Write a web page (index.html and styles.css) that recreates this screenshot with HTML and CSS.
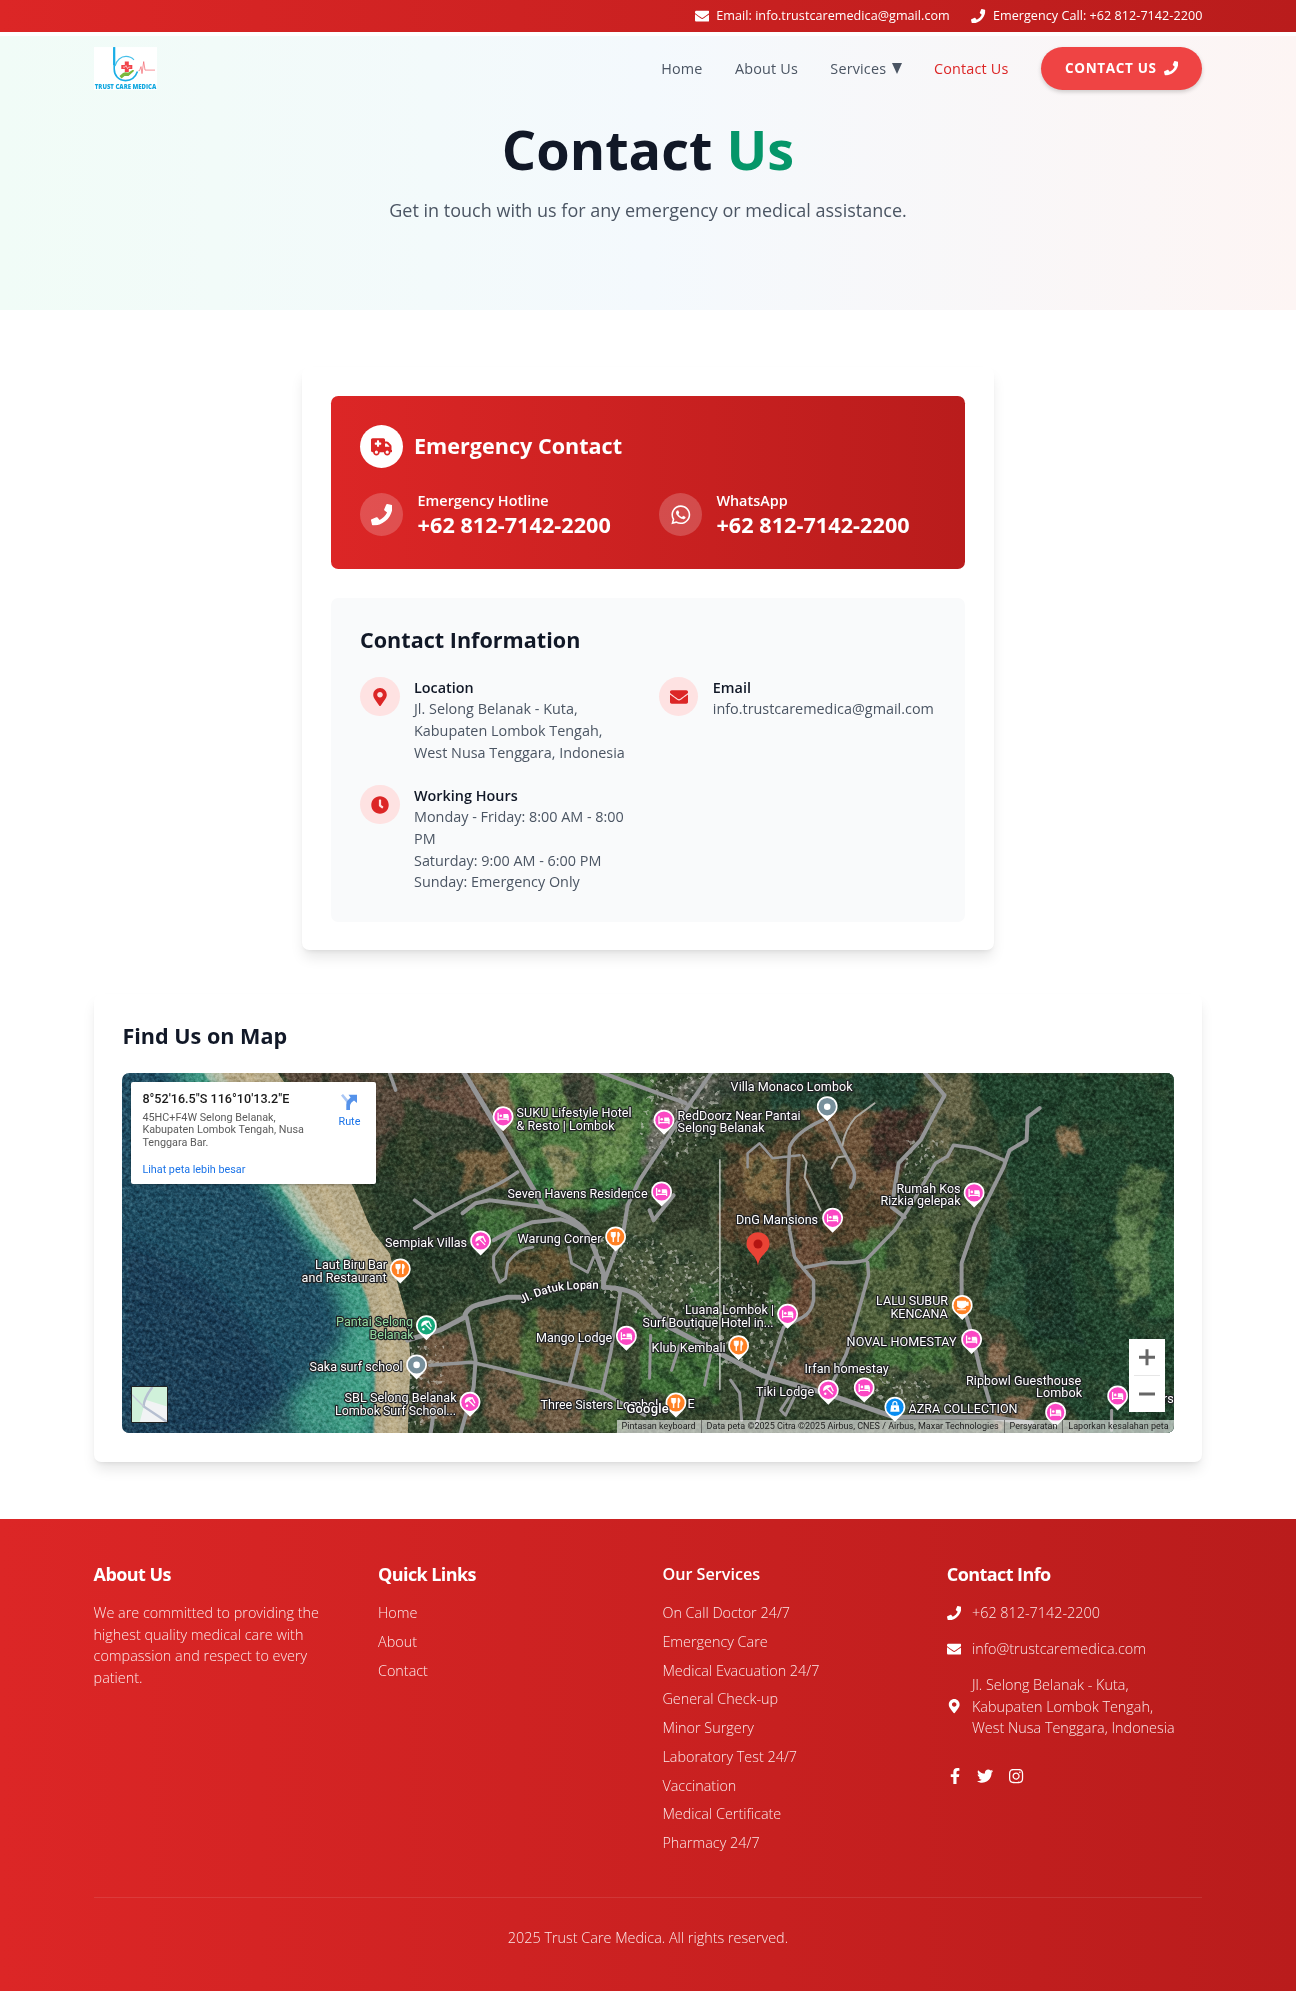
FILE: index.html
```html
<!DOCTYPE html>
<html lang="en">
<head>
<meta charset="utf-8">
<title>Contact Us - Trust Care Medica</title>
<link rel="stylesheet" href="styles.css">
</head>
<body>
<svg class="sprite" aria-hidden="true">
  <symbol id="i-phone" viewBox="0 0 512 512"><path d="M493.4 24.6l-104-24c-11.3-2.6-22.9 3.3-27.5 13.9l-48 112c-4.2 9.8-1.4 21.3 6.9 28l60.6 49.6c-36 76.7-98.9 140.5-177.2 177.2l-49.6-60.6c-6.8-8.3-18.2-11.1-28-6.9l-112 48C3.9 366.5-2 378.1.6 389.4l24 104C27.1 504.2 36.7 512 48 512c256.1 0 464-207.5 464-464 0-11.2-7.7-20.9-18.6-23.4z"/></symbol>
  <symbol id="i-mail" viewBox="0 0 512 512"><path d="M502.3 190.8c3.9-3.1 9.7-.2 9.7 4.7V400c0 26.5-21.5 48-48 48H48c-26.5 0-48-21.5-48-48V195.6c0-5 5.7-7.8 9.7-4.7 22.4 17.4 52.1 39.5 154.1 113.6 21.1 15.4 56.7 47.8 92.2 47.6 35.7.3 72-32.8 92.3-47.6 102-74.1 131.6-96.3 154-113.7zM256 320c23.2.4 56.6-29.2 73.4-41.4 132.7-96.3 142.8-104.7 173.4-128.7 5.8-4.5 9.2-11.5 9.2-18.9v-19c0-26.5-21.5-48-48-48H48c-26.5 0-48 21.5-48 48v19c0 7.4 3.4 14.3 9.2 18.9 30.6 23.9 40.7 32.4 173.4 128.7 16.8 12.2 50.2 41.8 73.4 41.4z"/></symbol>
  <symbol id="i-marker" viewBox="0 0 384 512"><path d="M172.268 501.67C26.97 291.031 0 269.413 0 192 0 85.961 85.961 0 192 0s192 85.961 192 192c0 77.413-26.97 99.031-172.268 309.67-9.535 13.774-29.93 13.773-39.464 0zM192 272c44.183 0 80-35.817 80-80s-35.817-80-80-80-80 35.817-80 80 35.817 80 80 80z"/></symbol>
  <symbol id="i-clock" viewBox="0 0 512 512"><path d="M256,8C119,8,8,119,8,256S119,504,256,504,504,393,504,256,393,8,256,8Zm92.49,313h0l-20,25a16,16,0,0,1-22.49,2.5h0l-67-49.72a40,40,0,0,1-15-31.23V112a16,16,0,0,1,16-16h32a16,16,0,0,1,16,16V256l58,42.5A16,16,0,0,1,348.49,321Z"/></symbol>
  <symbol id="i-whatsapp" viewBox="0 0 448 512"><path d="M380.9 97.1C339 55.1 283.2 32 223.9 32c-122.4 0-222 99.6-222 222 0 39.1 10.2 77.3 29.6 111L0 480l117.7-30.9c32.4 17.7 68.9 27 106.1 27h.1c122.3 0 224.1-99.6 224.1-222 0-59.3-25.2-115-67.1-157zm-157 341.6c-33.2 0-65.7-8.9-94-25.7l-6.7-4-69.8 18.3L72 359.2l-4.4-7c-18.5-29.4-28.2-63.3-28.2-98.2 0-101.7 82.8-184.5 184.6-184.5 49.3 0 95.6 19.2 130.4 54.1 34.8 34.9 56.2 81.2 56.1 130.5 0 101.8-84.9 184.6-186.6 184.6zm101.2-138.2c-5.5-2.8-32.8-16.2-37.9-18-5.1-1.9-8.8-2.8-12.5 2.8-3.7 5.6-14.3 18-17.6 21.8-3.2 3.7-6.5 4.2-12 1.4-32.6-16.3-54-29.1-75.5-66-5.7-9.8 5.7-9.1 16.3-30.3 1.8-3.7.9-6.9-.5-9.7-1.4-2.8-12.5-30.1-17.1-41.2-4.5-10.8-9.1-9.3-12.5-9.5-3.2-.2-6.9-.2-10.6-.2-3.7 0-9.7 1.4-14.8 6.9-5.1 5.6-19.4 19-19.4 46.3 0 27.3 19.9 53.7 22.6 57.4 2.8 3.7 39.1 59.7 94.8 83.8 35.2 15.2 49 16.5 66.6 13.9 10.7-1.6 32.8-13.4 37.4-26.4 4.6-13 4.6-24.1 3.2-26.4-1.3-2.5-5-3.9-10.5-6.6z"/></symbol>
  <symbol id="i-ambulance" viewBox="0 0 640 512"><path d="M0 48C0 21.5 21.5 0 48 0H368c26.5 0 48 21.5 48 48V96h50.7c17 0 33.3 6.7 45.3 18.7L589.3 192c12 12 18.7 28.3 18.7 45.3V256v32 64c17.7 0 32 14.3 32 32s-14.3 32-32 32H576c0 53-43 96-96 96s-96-43-96-96H256c0 53-43 96-96 96s-96-43-96-96H48c-26.5 0-48-21.5-48-48V48zM416 256H544V237.3L466.7 160H416v96zM160 464a48 48 0 1 0 0-96 48 48 0 1 0 0 96zm368-48a48 48 0 1 0 -96 0 48 48 0 1 0 96 0zM176 80v48l-48 0c-8.8 0-16 7.2-16 16v32c0 8.8 7.2 16 16 16h48v48c0 8.8 7.2 16 16 16h32c8.8 0 16-7.2 16-16V192h48c8.8 0 16-7.2 16-16V144c0-8.8-7.2-16-16-16H240V80c0-8.8-7.2-16-16-16H192c-8.8 0-16 7.2-16 16z"/></symbol>
  <symbol id="i-facebook" viewBox="0 0 320 512"><path d="M279.14 288l14.22-92.66h-88.91v-60.13c0-25.35 12.42-50.06 52.24-50.06h40.42V6.26S260.43 0 225.36 0c-73.22 0-121.08 44.38-121.08 124.72v70.62H22.89V288h81.39v224h100.17V288z"/></symbol>
  <symbol id="i-twitter" viewBox="0 0 512 512"><path d="M459.37 151.716c.325 4.548.325 9.097.325 13.645 0 138.72-105.583 298.558-298.558 298.558-59.452 0-114.68-17.219-161.137-47.106 8.447.974 16.568 1.299 25.34 1.299 49.055 0 94.213-16.568 130.274-44.832-46.132-.975-84.792-31.188-98.112-72.772 6.498.974 12.995 1.624 19.818 1.624 9.421 0 18.843-1.3 27.614-3.573-48.081-9.747-84.143-51.98-84.143-102.985v-1.299c13.969 7.797 30.214 12.67 47.431 13.319-28.264-18.843-46.781-51.005-46.781-87.391 0-19.492 5.197-37.36 14.294-52.954 51.655 63.675 129.3 105.258 216.365 109.807-1.624-7.797-2.599-15.918-2.599-24.04 0-57.828 46.782-104.934 104.934-104.934 30.213 0 57.502 12.67 76.67 33.137 23.715-4.548 46.456-13.32 66.599-25.34-7.798 24.366-24.366 44.833-46.132 57.827 21.117-2.273 41.584-8.122 60.426-16.243-14.292 20.791-32.161 39.308-52.628 54.253z"/></symbol>
  <symbol id="i-instagram" viewBox="0 0 448 512"><path d="M224.1 141c-63.6 0-114.9 51.3-114.9 114.9s51.3 114.9 114.9 114.9S339 319.5 339 255.9 287.7 141 224.1 141zm0 189.6c-41.1 0-74.7-33.5-74.7-74.7s33.5-74.7 74.7-74.7 74.7 33.5 74.7 74.7-33.6 74.7-74.7 74.7zm146.4-194.3c0 14.9-12 26.8-26.8 26.8-14.9 0-26.8-12-26.8-26.8s12-26.8 26.8-26.8 26.8 12 26.8 26.8zm76.1 27.2c-1.7-35.9-9.9-67.7-36.2-93.9-26.2-26.2-58-34.4-93.9-36.2-37-2.1-147.9-2.1-184.9 0-35.8 1.7-67.6 9.9-93.9 36.1s-34.4 58-36.2 93.9c-2.1 37-2.1 147.9 0 184.9 1.7 35.9 9.9 67.7 36.2 93.9s58 34.4 93.9 36.2c37 2.1 147.9 2.1 184.9 0 35.9-1.7 67.7-9.9 93.9-36.2 26.2-26.2 34.4-58 36.2-93.9 2.1-37 2.1-147.8 0-184.8zM398.8 388c-7.8 19.6-22.9 34.7-42.6 42.6-29.5 11.7-99.5 9-132.1 9s-102.7 2.6-132.1-9c-19.6-7.8-34.7-22.9-42.6-42.6-11.7-29.5-9-99.5-9-132.1s-2.6-102.7 9-132.1c7.8-19.6 22.9-34.7 42.6-42.6 29.5-11.7 99.5-9 132.1-9s102.7-2.6 132.1 9c19.6 7.8 34.7 22.9 42.6 42.6 11.7 29.5 9 99.5 9 132.1s2.7 102.7-9 132.1z"/></symbol>
</svg>

<div class="topbar">
  <div class="container topbar-inner">
    <span class="topbar-item"><svg class="icon-16"><use href="#i-mail"/></svg>Email: info.trustcaremedica@gmail.com</span>
    <span class="topbar-item"><svg class="icon-16"><use href="#i-phone"/></svg>Emergency Call: +62 812-7142-2200</span>
  </div>
</div>

<section class="hero">
  <header class="container nav">
    <svg class="logo" viewBox="0 0 63 43">
      <rect width="63" height="43" fill="#fff"/>
      <path d="M20.2 .5V22c0 6.5 4.500 11.500 11.300 11.500 5.500 0 10-3.500 12-9" fill="none" stroke="#19aee6" stroke-width="1.600"/>
      <path d="M20.200 0v18" stroke="#19aee6" stroke-width="2.200"/>
      <path d="M21 19c1.500-6 6-9.700 11-9.700 3.200 0 6 1.300 8 3.400" fill="none" stroke="#45bfe9" stroke-width="1.100"/>
      <path d="M30.800 14.500h4v3.300h3.500v4h-3.500V25h-4v-3.200h-3.500v-4h3.500z" fill="#f2434a"/>
      <path d="M29 20h2l1-1.500 1.500 3 1-1.500h2" fill="none" stroke="#fff" stroke-width=".6"/>
      <path d="M25.500 29l3.500-3c2-1.500 4-.5 5.500-.5l4-2.500c1.500-.5 2 .5 1 1.500l-5 4.500h-4l-3 2.500z" fill="#79b83e"/>
      <path d="M44.500 23.500h1l1.500-4 1 7 1.700-12 1.300 8.500h10" fill="none" stroke="#f2616a" stroke-width=".7"/>
      <text x=".8" y="42.300" textLength="61.500" lengthAdjust="spacingAndGlyphs" class="logo-text">TRUST CARE MEDICA</text>
    </svg>
    <nav class="menu">
      <a>Home</a>
      <a>About Us</a>
      <a class="has-menu">Services <svg class="caret" viewBox="0 0 10 11"><path d="M0 0h10L5 11z"/></svg></a>
      <a class="active">Contact Us</a>
      <a class="cta">CONTACT US <svg class="icon-16"><use href="#i-phone"/></svg></a>
    </nav>
  </header>
  <h1>Contact <span>Us</span></h1>
  <p>Get in touch with us for any emergency or medical assistance.</p>
</section>

<main>
  <section class="card contact-card">
    <div class="emergency">
      <div class="emergency-head">
        <span class="disc disc-white"><svg class="icon-24"><use href="#i-ambulance"/></svg></span>
        <h2>Emergency Contact</h2>
      </div>
      <div class="grid-2">
        <div class="line-item">
          <span class="disc disc-glass"><svg class="icon-24"><use href="#i-phone"/></svg></span>
          <div><p class="line-label">Emergency Hotline</p><p class="line-number">+62 812-7142-2200</p></div>
        </div>
        <div class="line-item">
          <span class="disc disc-glass"><svg class="icon-24"><use href="#i-whatsapp"/></svg></span>
          <div><p class="line-label">WhatsApp</p><p class="line-number">+62 812-7142-2200</p></div>
        </div>
      </div>
    </div>
    <div class="info">
      <h2 class="heading">Contact Information</h2>
      <div class="grid-2">
        <div class="info-item">
          <span class="disc disc-pink"><svg class="icon-20"><use href="#i-marker"/></svg></span>
          <div><h3>Location</h3><p>Jl. Selong Belanak - Kuta,<br>Kabupaten Lombok Tengah,<br>West Nusa Tenggara, Indonesia</p></div>
        </div>
        <div class="info-item">
          <span class="disc disc-pink"><svg class="icon-20"><use href="#i-mail"/></svg></span>
          <div><h3>Email</h3><p>info.trustcaremedica@gmail.com</p></div>
        </div>
        <div class="info-item">
          <span class="disc disc-pink"><svg class="icon-20"><use href="#i-clock"/></svg></span>
          <div><h3>Working Hours</h3><p>Monday - Friday: 8:00 AM - 8:00<br>PM<br>Saturday: 9:00 AM - 6:00 PM<br>Sunday: Emergency Only</p></div>
        </div>
      </div>
    </div>
  </section>

  <section class="card map-card">
    <h2 class="heading">Find Us on Map</h2>
    <div class="map">
      <svg class="map-canvas" viewBox="122.4 1072.8 1051.2 360" preserveAspectRatio="none">
        <defs>
          <filter id="soft" x="-20%" y="-20%" width="140%" height="140%"><feTurbulence type="fractalNoise" baseFrequency=".045" numOctaves="3" seed="4"/><feDisplacementMap in="SourceGraphic" scale="22"/><feGaussianBlur stdDeviation="1.600"/></filter>
          <filter id="surf" x="-20%" y="-20%" width="140%" height="140%"><feGaussianBlur stdDeviation="9"/></filter>
          <filter id="edge"><feGaussianBlur stdDeviation="1.200"/></filter>
          <filter id="trees" x="0" y="0" width="100%" height="100%" color-interpolation-filters="sRGB"><feTurbulence type="fractalNoise" baseFrequency=".06" numOctaves="4" seed="11"/><feColorMatrix values="0 0 0 0 .08  0 0 0 0 .17  0 0 0 0 .11  5 0 0 0 -2.500"/></filter>
          <filter id="earth" x="0" y="0" width="100%" height="100%" color-interpolation-filters="sRGB"><feTurbulence type="fractalNoise" baseFrequency=".035" numOctaves="4" seed="23"/><feColorMatrix values="0 0 0 0 .46  0 0 0 0 .42  0 0 0 0 .3  0 5 0 0 -2.700"/></filter>
          <filter id="grain" x="0" y="0" width="100%" height="100%" color-interpolation-filters="sRGB"><feTurbulence type="fractalNoise" baseFrequency=".3" numOctaves="3" seed="7"/><feColorMatrix values="1.500 0 0 0 -.25  1.500 0 0 0 -.25  1.500 0 0 0 -.25  0 0 0 0 1"/></filter>
          <filter id="roofs" x="0" y="0" width="100%" height="100%" color-interpolation-filters="sRGB"><feTurbulence type="fractalNoise" baseFrequency=".2" numOctaves="2" seed="31"/><feColorMatrix values="0 0 0 0 .78  0 0 0 0 .78  0 0 0 0 .75  0 12 0 0 -7.300"/></filter>
          <filter id="ripple" x="0" y="0" width="100%" height="100%" color-interpolation-filters="sRGB"><feTurbulence type="fractalNoise" baseFrequency=".03 .25" numOctaves="3" seed="9"/><feColorMatrix values="0 0 0 0 .45  0 0 0 0 .6  0 0 0 0 .65  1.600 0 0 0 -.65"/></filter>
          <clipPath id="land"><path d="M270 1060L354 1187 372 1230 390 1253 400 1290 408 1320 411 1360 408 1440H1180V1060z"/></clipPath>
          <clipPath id="sea"><path d="M110 1060H208L290 1187 319 1230 354 1253 372 1320 376 1360 369 1440H110z"/></clipPath>
          <clipPath id="town"><path d="M650 1073h70v60l-60 40-20-40zM600 1235h50l130 60 10 60-20 30-50-20-130-80zM905 1140h40l-20 40h-20zM405 1345h40v80h-40zM870 1375h60v30h-60z"/></clipPath>
          <g id="pin"><path d="M0 14.500L-6.500 8A10.400 10.400 0 1 1 6.500 8z" fill="#fff"/><circle r="8.700" fill="currentColor"/></g>
          <g id="bed"><use href="#pin"/><path d="M-5-4v8M-5 2.500H5.200M5 4v-5.300" stroke="#fff" stroke-width="1.300"/><path d="M.2-2.700h4.900v4H.2z" fill="#fff"/><circle cx="-2.300" cy="-1" r="1.300" fill="#fff"/></g>
          <g id="fork"><use href="#pin"/><path d="M-2.300-5v10M2.500-5v10" stroke="#fff" stroke-width="1.500"/><path d="M-4.500-5v3.500a2.200 2 0 0 0 4.400 0V-5M2.500-5c2.500 1.500 2 4.500 0 5.500" fill="#fff" stroke="#fff" stroke-width=".6"/></g>
          <g id="beach"><use href="#pin"/><path d="M-5 1A5 5 0 0 1 3-4z" fill="#fff"/><path d="M-1-1.500L4.500 4M2-5l3 6" stroke="#fff" stroke-width="1.300"/><circle cx="-3" cy="3.500" r="1.200" fill="#fff"/></g>
          <g id="dot"><use href="#pin"/><circle r="3.300" fill="#fff"/></g>
          <path id="lopan" d="M522 1304Q545 1292 563 1290T606 1289"/>
        </defs>

        <rect x="122" y="1072" width="1053" height="362" fill="#1c4a60"/>
        <path d="M150 1060L210 1060 300 1190 360 1260 378 1330 378 1440H240C280 1400 335 1370 345 1330 335 1270 290 1210 260 1180 230 1130 190 1100 165 1060z" fill="#3b9480" filter="url(#surf)"/>
        <path d="M205 1060L290 1187 319 1230 354 1265 368 1310 371 1360 345 1440" fill="none" stroke="#45a88b" stroke-width="18" filter="url(#surf)"/>
        <path d="M122 1240Q260 1280 300 1440H122z" fill="#12304e" opacity=".6" filter="url(#surf)"/>
        <g clip-path="url(#sea)"><rect x="-150" y="900" width="800" height="700" filter="url(#ripple)" opacity=".22" transform="rotate(28 250 1250)"/></g>
        <path d="M203 1060L290 1187 319 1230 349 1253 368 1300 376 1345 374 1440H450V1060z" fill="#b5a988" filter="url(#edge)"/>
        <path d="M206 1062L290 1187 317 1227 347 1256" fill="none" stroke="#b3c2ae" stroke-width="15" opacity=".8" filter="url(#edge)"/>
        <path d="M240 1062L325 1190 345 1235 375 1262 390 1320 394 1440" fill="none" stroke="#c7b791" stroke-width="9" opacity=".6" filter="url(#edge)"/>

        <g clip-path="url(#land)">
          <rect x="250" y="1060" width="930" height="380" fill="#37472f"/>
          <g filter="url(#soft)">
            <path d="M270 1060H500L515 1150 440 1175 380 1180z" fill="#594a3a"/>
            <path d="M400 1090L470 1085 500 1140 440 1160z" fill="#664f40"/>
            <path d="M480 1073H660L640 1190 560 1210 525 1160z" fill="#4d7841"/>
            <path d="M520 1073h55l10 40-50 12zM590 1120h45l-10 50-45-5z" fill="#668a4d"/>
            <path d="M560 1075h35l5 30-30 5z" fill="#4a4a3a"/>
            <path d="M545 1150h35l-5 40-25 5z" fill="#8b8a5e"/>
            <path d="M520 1165h30l10 35-20 10zM590 1180h40l-5 25-40 5z" fill="#3f8045"/>
            <path d="M470 1073h35l14 50-18 8z" fill="#7f6d50"/>
            <path d="M410 1100L500 1130 510 1180 430 1210 375 1180z" fill="#293c29" opacity=".8"/>
            <path d="M370 1180L480 1210 495 1290 430 1320 400 1300z" fill="#293c2c"/>
            <path d="M465 1150h45l-4 35-45 10z" fill="#74603f"/>
            <path d="M465 1210h65l-10 35h-50z" fill="#42703b"/>
            <path d="M500 1250h75l-5 30h-60z" fill="#665434"/>
            <path d="M480 1285h120l-10 30-120 5z" fill="#2b3f2a"/>
            <path d="M420 1335h45l5 90h-50z" fill="#705842"/>
            <path d="M480 1310H600V1370L485 1360z" fill="#695a3e"/>
            <path d="M480 1370L600 1390V1432H490z" fill="#705c45"/>
            <path d="M520 1310h20v110h-20zM585 1360h40v70h-40z" fill="#4f6e3a"/>
            <path d="M620 1200h105v60l-60 60-45-20z" fill="#4a593d"/>
            <path d="M700 1110L790 1073H700z" fill="#4a5144"/>
            <path d="M640 1180L690 1110 720 1073H700L650 1120z" fill="#696a60"/>
            <path d="M725 1150L790 1130 850 1140 900 1200 890 1240 800 1250 720 1240z" fill="#59442f"/>
            <path d="M800 1110L900 1110 900 1200 860 1190z" fill="#6f553a"/>
            <path d="M740 1155h40v45h-30z" fill="#7f6843"/>
            <path d="M805 1160h25l10 50-30 20z" fill="#2b3426"/>
            <path d="M650 1170h60v60h-50z" fill="#303c2a"/>
            <path d="M740 1250L800 1270 790 1300 730 1300z" fill="#2d3a28"/>
            <path d="M770 1260L800 1300 790 1330 760 1320zM690 1285l30-5v40l-35-5z" fill="#43683a"/>
            <path d="M795 1220h20l20 60-15 50-30-10z" fill="#6a4e39"/>
            <path d="M815 1270h45l-15 90h-50z" fill="#544f35"/>
            <path d="M765 1365L840 1350 825 1390z" fill="#735944"/>
            <path d="M870 1225H955V1380L860 1385 850 1340z" fill="#53633d"/>
            <path d="M855 1240h35l-5 30h-25zM870 1340l80-5v30l-80 12z" fill="#44703a"/>
            <path d="M640 1310L720 1345V1400L640 1390z" fill="#417037"/>
            <path d="M770 1073H930L900 1110H770z" fill="#244332"/>
            <path d="M925 1073h45v60l-25 35-15-20z" fill="#67664a"/>
            <path d="M880 1110h50l-30 60h-30z" fill="#46322c"/>
            <path d="M925 1160h75l-25 60-55 10z" fill="#4b5b3e"/>
            <path d="M975 1073H1180V1440H1090L1000 1300 1010 1170z" fill="#23452f"/>
            <path d="M1055 1125h22l5 25-18 6z" fill="#8b7353"/>
            <path d="M1130 1165h30l5 65-40 60-15-30z" fill="#4b6b40"/>
            <path d="M1115 1220h35v70l-30 15z" fill="#5e8050"/>
            <path d="M1150 1220h30v100h-30z" fill="#32603a"/>
            <path d="M990 1220l50 30-10 80-45-20z" fill="#2c5037"/>
            <path d="M1020 1240h50l10 100h-50z" fill="#1c3729"/>
            <path d="M985 1335h20v40h-15zM1010 1395h25l-10 30h-35z" fill="#84694f"/>
            <path d="M890 1370h95v45h-80z" fill="#4b573d"/>
          </g>
          <rect x="250" y="1060" width="930" height="380" filter="url(#earth)" opacity=".14"/>
          <rect x="250" y="1060" width="930" height="380" filter="url(#trees)" opacity=".5"/>
          <g clip-path="url(#town)"><rect x="250" y="1060" width="930" height="380" filter="url(#roofs)" opacity=".6"/></g>
        </g>
        <rect x="122" y="1072" width="1053" height="362" filter="url(#grain)" class="grain"/>

        <g fill="none" stroke="#949596" stroke-width="4" stroke-linejoin="round" stroke-linecap="round">
          <path d="M463 1070L511 1150 545 1208Q580 1218 590 1237L604 1273V1287" stroke-width="5"/>
          <path d="M415 1228L436 1215 468 1198Q500 1185 518 1172M415 1200L435 1215M390 1073l6 17" stroke-width="3.500"/>
          <path d="M463 1213L476 1203 490 1200 545 1207M494 1240Q515 1228 533 1222L561 1219Q580 1224 590 1237"/>
          <path d="M511 1233L494 1256V1268L500 1282 506 1278 508 1263Q518 1248 533 1247M569 1247L572 1263 588 1272 594 1257" stroke-width="3"/>
          <path d="M601 1072L650 1090 686 1103M712 1072L686 1110 640 1180 628 1205 624 1230 604 1283M650 1210l4 10 20-25"/>
          <path d="M621 1290L611 1353 602 1393M580 1343L570 1383M430 1365L472 1362 602 1392 645 1415" stroke-width="3.500"/>
          <path d="M408 1340L440 1330 465 1317Q466 1308 480 1304L508 1297H525M604 1287Q630 1288 640 1297L670 1327 762 1375 825 1393 895 1417 991 1417 1032 1423" stroke-width="5"/>
          <path d="M467 1317L476 1360 474 1387 461 1433M435 1407L431 1433"/>
          <path d="M823 1120Q796 1132 790 1147L788 1187 790 1230 795 1257Q806 1272 814 1280V1300Q812 1312 803 1317L784 1327 769 1373 757 1425" stroke-width="3.500"/>
          <path d="M830 1122L842 1147 854 1170Q857 1178 851 1187" stroke-width="3.500"/>
          <path d="M843 1145Q845 1130 856 1117L875 1103M803 1155L807 1162 805 1177 813 1193 821 1210M832 1168L838 1157 846 1156" stroke-width="2" stroke="#aaa9a2"/>
          <path d="M748 1167V1153L760 1143 773 1158 800 1155" stroke-width="2.500"/>
          <path d="M925 1072L945 1095 939 1106 921 1140 899 1163 892 1207 905 1217"/>
          <path d="M1040 1108L1028 1117 1027 1140 1010 1150 1004 1167 975 1225 962 1263V1300L973 1337 980 1367 990 1402"/>
          <path d="M1004 1160L976 1148 954 1145 948 1156 936 1163 910 1207 895 1230 866 1260Q845 1264 832 1262L806 1267M868 1262L869 1275 847 1353 834 1380" stroke-width="3.500"/>
          <path d="M731 1380L740 1393 742 1420M799 1388L786 1415 781 1410 792 1393M651 1335L650 1378M680 1345L672 1370M711 1355L705 1385M1112 1410v20" stroke-width="3"/>
        </g>
        <path d="M720.300 1159V1390" stroke="#e6e6e4" stroke-width="1.200"/>

        <g class="pins">
          <use href="#bed" x="503.500" y="1116.500"/><use href="#bed" x="664.400" y="1120"/><use href="#bed" x="662" y="1191.700"/><use href="#bed" x="833" y="1218"/>
          <use href="#bed" x="974.500" y="1192.700"/><use href="#beach" x="481" y="1240.700"/><use href="#fork" x="616" y="1236.700" class="orange"/><use href="#fork" x="400.700" y="1268.700" class="orange"/>
          <use href="#beach" x="426.800" y="1325.500" class="green"/><use href="#dot" x="417" y="1364.700" class="slate"/><use href="#beach" x="470.400" y="1402"/><use href="#bed" x="626.800" y="1336"/>
          <use href="#dot" x="827.600" y="1106.500" class="slate"/><use href="#bed" x="788" y="1314"/><use href="#fork" x="739" y="1345.500" class="orange"/>
          <use href="#pin" x="962.600" y="1305.300" class="orange"/><path d="M958 1301h8v5q-4 4-8 0zM966 1302h2.500v3H966M957.500 1309.500h9" fill="#fff" stroke="#fff" stroke-width="1"/>
          <use href="#bed" x="972" y="1339.300"/><use href="#beach" x="828.700" y="1390"/><use href="#bed" x="864.600" y="1387.700"/>
          <use href="#pin" x="895.300" y="1407" class="blue"/><path d="M891.500 1405h7.600l.8 6.500h-9.200z" fill="#fff"/><path d="M893.300 1405v-1.500a2 2 0 0 1 4 0v1.500" fill="none" stroke="#fff" stroke-width="1.200"/><circle cx="895.300" cy="1408.500" r="1" fill="#0a8df0"/>
          <use href="#bed" x="1056" y="1412.300"/><use href="#bed" x="1118" y="1395.700"/><use href="#fork" x="676.300" y="1402.700" class="orange"/>
        </g>
        <path d="M758.400 1265.500C757 1254 746.900 1252.500 746.900 1243.500a11.500 11.500 0 0 1 23 0C769.900 1252.500 759.800 1254 758.400 1265.500z" fill="#ea4335"/><circle cx="758.400" cy="1243.800" r="4.500" fill="#b31412"/>

        <g class="labels">
          <text x="517" y="1117.300" textLength="115">SUKU Lifestyle Hotel</text><text x="517" y="1130" textLength="98">&amp; Resto | Lombok</text>
          <text x="678" y="1119.700" textLength="123">RedDoorz Near Pantai</text><text x="678" y="1132.300" textLength="87">Selong Belanak</text>
          <text x="731" y="1090.700" textLength="122">Villa Monaco Lombok</text>
          <text x="508" y="1198" textLength="140">Seven Havens Residence</text>
          <text x="736.500" y="1224.300" textLength="82">DnG Mansions</text>
          <text x="897" y="1192.700" textLength="64">Rumah Kos</text><text x="881" y="1205.300" textLength="80">Rizkia gelepak</text>
          <text x="385.500" y="1246.700" textLength="82">Sempiak Villas</text><text x="518" y="1243" textLength="84">Warung Corner</text>
          <text x="315.500" y="1269" textLength="72">Laut Biru Bar</text><text x="302" y="1282" textLength="85">and Restaurant</text>
          <text x="336.500" y="1326" textLength="77" class="leaf">Pantai Selong</text><text x="370" y="1338.700" textLength="44" class="leaf">Belanak</text>
          <text x="310" y="1371" textLength="93">Saka surf school</text>
          <text x="345" y="1402.300" textLength="112">SBL Selong Belanak</text><text x="335.500" y="1415" textLength="121">Lombok Surf School...</text>
          <text x="536.500" y="1342" textLength="76">Mango Lodge</text>
          <text x="541" y="1409" textLength="121">Three Sisters Lombok</text>
          <text x="685.500" y="1314.300" textLength="89">Luana Lombok |</text><text x="643" y="1327" textLength="131">Surf Boutique Hotel in...</text>
          <text x="652" y="1352" textLength="74">Klub Kembali</text>
          <text x="876.500" y="1305.300" textLength="72">LALU SUBUR</text><text x="891" y="1318" textLength="57">KENCANA</text>
          <text x="847" y="1346" textLength="110">NOVAL HOMESTAY</text>
          <text x="805" y="1373" textLength="84">Irfan homestay</text>
          <text x="756.500" y="1396.300" textLength="58">Tiki Lodge</text>
          <text x="909" y="1413" textLength="109">AZRA COLLECTION</text>
          <text x="966.500" y="1384.700" textLength="115">Ripbowl Guesthouse</text><text x="1036.500" y="1397.300" textLength="46">Lombok</text>
          <text x="1163.500" y="1403">rs</text><text x="688" y="1408">E</text>
          <text class="street"><textPath href="#lopan">Jl. Datuk Lopan</textPath></text>
          <text x="627" y="1413" textLength="42" class="brand">Google</text>
        </g>
      </svg>
      <div class="place">
        <div class="place-text">
          <strong>8°52'16.5"S 116°10'13.2"E</strong>
          <p>45HC+F4W Selong Belanak,<br>Kabupaten Lombok Tengah, Nusa<br>Tenggara Bar.</p>
          <a>Lihat peta lebih besar</a>
        </div>
        <div class="route">
          <svg viewBox="0 0 16 16"><path d="M0 1.500L2 0 7.500 6.500 6 9z" fill="#a9c6f5"/><path d="M5.300 16V10.500Q5.300 7.500 7.500 5.500L9.600 3.500 7.500.8H16V9L13 6.500 10.500 8.500Q9 10 9 12V16z" fill="#5592ea"/></svg>
          Rute
        </div>
      </div>
      <svg class="minimap" viewBox="0 0 36 36"><path d="M0 0h36v36H0z" fill="#f1f3f4"/><path d="M0 0h36v20L14 13 8 36H0z" fill="#d0f1da"/><path d="M21 0Q12 12 12 20L36 36" fill="none" stroke="#b5bfd0" stroke-width="2.500"/><path d="M0 8l12 12" stroke="#c5ccd8" stroke-width="1.500"/></svg>
      <div class="zoom"><svg viewBox="0 0 36 73"><path d="M10 18.300h16M18 10.300v16M10 55h16" stroke="#666" stroke-width="3"/><path d="M5 36.500h26" stroke="#e6e6e6"/></svg></div>
      <div class="credits"><span>Pintasan keyboard</span><span>Data peta ©2025 Citra ©2025 Airbus, CNES / Airbus, Maxar Technologies</span><span>Persyaratan</span><span>Laporkan kesalahan peta</span></div>
    </div>
  </section>
</main>

<footer class="footer">
  <div class="container">
    <div class="footer-grid">
      <div><h3>About Us</h3><p>We are committed to providing the<br>highest quality medical care with<br>compassion and respect to every<br>patient.</p></div>
      <div><h3>Quick Links</h3><ul class="links"><li>Home</li><li>About</li><li>Contact</li></ul></div>
      <div><h3 class="small">Our Services</h3><ul class="links"><li>On Call Doctor 24/7</li><li>Emergency Care</li><li>Medical Evacuation 24/7</li><li>General Check-up</li><li>Minor Surgery</li><li>Laboratory Test 24/7</li><li>Vaccination</li><li>Medical Certificate</li><li>Pharmacy 24/7</li></ul></div>
      <div><h3>Contact Info</h3>
        <ul class="contacts">
          <li><svg class="icon-16"><use href="#i-phone"/></svg><span>+62 812-7142-2200</span></li>
          <li><svg class="icon-16"><use href="#i-mail"/></svg><span>info@trustcaremedica.com</span></li>
          <li><svg class="icon-16"><use href="#i-marker"/></svg><span>Jl. Selong Belanak - Kuta,<br>Kabupaten Lombok Tengah,<br>West Nusa Tenggara, Indonesia</span></li>
        </ul>
        <div class="social"><svg><use href="#i-facebook"/></svg><svg><use href="#i-twitter"/></svg><svg><use href="#i-instagram"/></svg></div>
      </div>
    </div>
    <p class="copyright">2025 Trust Care Medica. All rights reserved.</p>
  </div>
</footer>
</body>
</html>
```
FILE: styles.css
```css
*, *::before, *::after { box-sizing: border-box; margin: 0; padding: 0; }
html { font-size: 14.4px; }
body { background: #fff; color: #111827; font-family: "Open Sans", "Noto Sans", sans-serif; font-size: 1rem; line-height: 1.5; font-weight: 400; }
ul { list-style: none; }
svg { display: block; flex: none; fill: currentColor; }
.sprite { position: absolute; width: 0; height: 0; }
.container { width: 77rem; margin: 0 auto; }
.icon-16 { width: 1rem; height: 1rem; }
.icon-20 { width: 1.25rem; height: 1.25rem; }
.icon-24 { width: 1.5rem; height: 1.5rem; }

.topbar { background: linear-gradient(to right, #dc2626, #b91c1c); color: #fff; height: 2.25rem; padding: .5rem 0; }
.topbar-inner { display: flex; justify-content: flex-end; gap: 1.5rem; font-size: .875rem; line-height: 1.25rem; font-weight: 500; letter-spacing: .003em; }
.topbar-item { display: flex; align-items: center; gap: .5rem; }

.hero { margin-top: .25rem; height: 19rem; background: linear-gradient(to right, #f1fcf7, #f4f9fd 50%, #fdf5f4); text-align: center; }
.nav { display: flex; justify-content: space-between; align-items: center; height: 5.25rem; padding: .75rem 0 1.5rem; }
.logo { width: 63px; height: 3rem; }
.logo-text { font: 800 6px "Open Sans", sans-serif; fill: #12a8e0; }
.menu { display: flex; align-items: center; gap: 2.25rem; color: #4b5563; letter-spacing: .012em; }
.menu a { display: flex; align-items: center; gap: .375rem; }
.menu .active { color: #dc2626; }
.caret { width: 10px; height: 11px; }
.menu .cta { height: 3rem; width: 161.500px; justify-content: center; gap: .5rem; border-radius: 1.500rem; background: #ef4444; color: #fff; font-size: .9375rem; font-weight: 700; letter-spacing: .05em; box-shadow: 0 2px 4px rgba(0, 0, 0, .18); }
.hero h1 { margin-top: .75rem; font-size: 3.75rem; line-height: 1; font-weight: 700; }
.hero h1 span { color: #059669; }
.hero p { margin-top: 1.5rem; font-size: 1.25rem; line-height: 1.75rem; color: #4b5563; }

.card { background: #fff; border-radius: .5rem; padding: 2rem; box-shadow: 0 9px 13.500px -2.700px rgba(0, 0, 0, .1), 0 3.600px 5.400px -3.600px rgba(0, 0, 0, .1); }
.contact-card { width: 48rem; margin: 4rem auto 0; }
.disc { display: flex; align-items: center; justify-content: center; flex: none; border-radius: 50%; width: 3rem; height: 3rem; }
.disc-white { background: #fff; color: #dc2626; }
.disc-glass { background: rgba(255, 255, 255, .2); color: #fff; }
.disc-pink { width: 2.75rem; height: 2.75rem; background: #fee2e2; color: #dc2626; }
.grid-2 { display: grid; grid-template-columns: 1fr 1fr; gap: 1.5rem; }
.emergency { background: linear-gradient(to right, #dc2626, #b91c1c); border-radius: .5rem; padding: 2rem; color: #fff; }
.emergency-head { display: flex; align-items: center; gap: .75rem; margin-bottom: 1.5rem; }
.emergency h2 { font-size: 1.5rem; line-height: 2rem; font-weight: 700; }
.line-item { display: flex; align-items: center; gap: 1rem; }
.line-label { font-weight: 600; line-height: 1.5rem; }
.line-number { font-size: 1.5rem; line-height: 2rem; font-weight: 700; letter-spacing: .003em; }
.info { margin-top: 2rem; background: #f9fafb; border-radius: .5rem; padding: 2rem; }
.heading { font-size: 1.5rem; line-height: 2rem; font-weight: 700; margin-bottom: 1.5rem; }
.info-item { display: flex; align-items: flex-start; gap: 1rem; }
.info-item h3 { font-size: 1rem; line-height: 1.5rem; font-weight: 600; }
.info-item p { color: #4b5563; white-space: nowrap; }

.map-card { width: 77rem; margin: 3rem auto 4rem; }
.map { position: relative; height: 25rem; border-radius: .5rem; overflow: hidden; font-family: Roboto, sans-serif; font-weight: 400; }
.map-canvas { width: 100%; height: 100%; }
.grain { mix-blend-mode: soft-light; opacity: .55; }
.pins { color: #fb48c4; }
.orange { color: #ff8125; }
.green { color: #16a87a; }
.slate { color: #78909c; }
.blue { color: #0a8df0; }
.labels text { font-size: 12.600px; fill: #fff; stroke: #202124; stroke-width: 2.400px; stroke-linejoin: round; paint-order: stroke; }
.labels .leaf { fill: #94dba0; }
.labels .street { font-size: 11.500px; font-weight: 500; }
.labels .brand { font-size: 13px; font-weight: 500; }
.place { position: absolute; left: 9px; top: 9px; width: 245px; height: 102px; padding: 9px 16px 0 11px; display: flex; justify-content: space-between; background: #fff; border-radius: 2px; box-shadow: 0 1px 3px rgba(0, 0, 0, .3); font-size: 10.800px; line-height: 12.600px; color: #5b5b5b; white-space: nowrap; }
.place strong { display: block; font-size: 12.600px; line-height: 15px; font-weight: 500; color: #1a1a1a; }
.place p { margin-top: 6px; }
.place a { display: block; margin-top: 14px; color: #1a73e8; }
.route { display: flex; flex-direction: column; align-items: center; gap: 6px; padding-top: 3px; color: #1a73e8; }
.route svg { width: 16px; height: 16px; }
.minimap { position: absolute; left: 9px; bottom: 10px; width: 37px; height: 37px; border: 1px solid #222; border-radius: 1px; }
.zoom { position: absolute; right: 9px; bottom: 21px; width: 36px; height: 73px; background: #fff; }
.credits { position: absolute; right: 0; bottom: 0; height: 13px; display: flex; background: rgba(245, 245, 245, .62); font-size: 9px; line-height: 13px; color: #222; white-space: nowrap; }
.credits span { padding: 0 5px; border-left: 1px solid rgba(60, 60, 60, .6); }
.credits span:first-child { border: 0; }

.footer { background: linear-gradient(to right, #dc2626, #b91c1c); color: #fff; padding: 3rem 0 calc(3rem - 1px); font-weight: 300; }
.footer-grid { display: grid; grid-template-columns: repeat(4, 1fr); gap: 2rem; padding-bottom: 3rem; color: rgba(255, 255, 255, .9); }
.footer h3 { font-size: 1.25rem; line-height: 1.75rem; font-weight: 700; letter-spacing: -.032em; margin-bottom: 1rem; color: #fff; }
.footer h3.small { font-size: 1.125rem; font-weight: 600; letter-spacing: 0; }
.links { display: flex; flex-direction: column; gap: .5rem; }
.contacts { display: flex; flex-direction: column; gap: 1rem; }
.contacts li { display: flex; align-items: center; gap: .75rem; }
.contacts svg { color: #fff; }
.footer p, .contacts span { white-space: nowrap; }
.social { display: flex; gap: 1rem; margin-top: 2rem; color: #fff; }
.social svg { width: 1.125rem; height: 1.125rem; }
.copyright { border-top: 1px solid rgba(255, 255, 255, .1); padding-top: 2rem; text-align: center; color: rgba(255, 255, 255, .9); }
```
